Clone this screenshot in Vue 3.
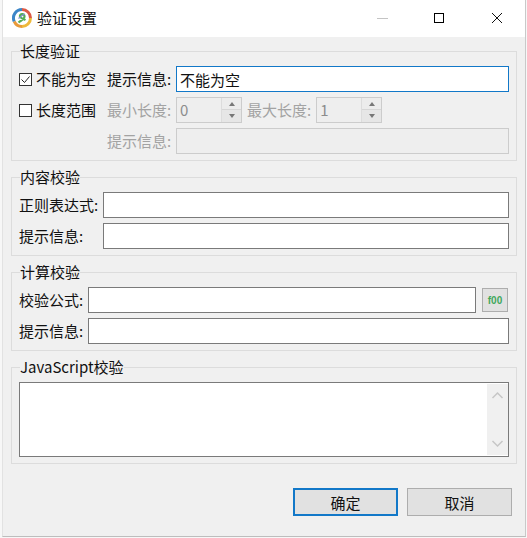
<script setup>
const sectionTwo = [
  { label: '正则表达式:' },
  { label: '提示信息:' }
]
</script>

<template>
  <div class="window">
    <div class="frame">
      <header class="titlebar">
        <svg class="logo" width="20" height="20" viewBox="0 0 20 20" fill="none">
          <path d="M10 1.500A8.500 8.500 0 0 1 18.500 10" stroke="#dc5a45" stroke-width="3" />
          <path d="M18.500 10A8.500 8.500 0 0 1 10 18.500" stroke="#eeb93a" stroke-width="3" />
          <path d="M10 18.500A8.500 8.500 0 0 1 2.200 13.400" stroke="#e89a3a" stroke-width="3" />
          <path d="M2.200 13.400A8.500 8.500 0 0 1 10 1.500" stroke="#3c86c8" stroke-width="3" />
          <path d="M6.500 14.500C9 12.500 12.500 11 12.500 8.500S9 5 8 7.500s3 3 5.500 4.500" stroke="#55ad55" stroke-width="2.200" />
          <path d="M6.500 10.500C8.500 8.500 11 6.500 13 6" stroke="#7d8fd0" stroke-width="1.200" />
        </svg>
        <span class="title">验证设置</span>
        <div class="controls">
          <svg class="ctl" width="56" height="36" viewBox="0 0 56 36"><path d="M20 18.500h11" stroke="#c4c4c4" /></svg>
          <svg class="ctl" width="56" height="36" viewBox="0 0 56 36"><rect x="21.500" y="13.500" width="9" height="9" fill="none" stroke="#000" /></svg>
          <svg class="ctl" width="56" height="36" viewBox="0 0 56 36"><path d="M23 13l10 10M33 13l-10 10" stroke="#111" /></svg>
        </div>
      </header>

      <main class="body">
        <fieldset class="group">
          <legend>长度验证</legend>
          <div class="length-grid">
            <label class="check"><span class="box">
              <svg width="13" height="13" viewBox="0 0 13 13"><path d="M2.500 6.500l3 3 5-6" fill="none" stroke="#222" /></svg>
            </span>不能为空</label>
            <span class="lbl">提示信息:</span>
            <input class="field focus" value="不能为空" />

            <label class="check"><span class="box"></span>长度范围</label>
            <span class="lbl off">最小长度:</span>
            <div class="spin-row">
              <div class="spin">
                <span class="spin-val">0</span>
                <span class="arrows"><i class="up"></i><i class="down"></i></span>
              </div>
              <span class="lbl off">最大长度:</span>
              <div class="spin">
                <span class="spin-val">1</span>
                <span class="arrows"><i class="up"></i><i class="down"></i></span>
              </div>
            </div>

            <span></span>
            <span class="lbl off">提示信息:</span>
            <input class="field disabled" disabled />
          </div>
        </fieldset>

        <fieldset class="group">
          <legend>内容校验</legend>
          <div class="pair-grid wide">
            <template v-for="row in sectionTwo" :key="row.label">
              <span class="lbl">{{ row.label }}</span>
              <input class="field" />
            </template>
          </div>
        </fieldset>

        <fieldset class="group">
          <legend>计算校验</legend>
          <div class="pair-grid">
            <span class="lbl">校验公式:</span>
            <div class="formula">
              <input class="field grow" />
              <button class="fx" type="button">f00</button>
            </div>
            <span class="lbl">提示信息:</span>
            <input class="field" />
          </div>
        </fieldset>

        <fieldset class="group">
          <legend>JavaScript校验</legend>
          <div class="script">
            <div class="scrollbar">
              <svg width="17" height="17" viewBox="0 0 17 17"><path d="M3.500 10l5-5 5 5" fill="none" stroke="#c6c6c6" stroke-width="1.500" /></svg>
              <svg width="17" height="17" viewBox="0 0 17 17"><path d="M3.500 7l5 5 5-5" fill="none" stroke="#c6c6c6" stroke-width="1.500" /></svg>
            </div>
          </div>
        </fieldset>

        <footer class="actions">
          <button class="btn primary" type="button">确定</button>
          <button class="btn" type="button">取消</button>
        </footer>
      </main>
    </div>
  </div>
</template>

<style>
html, body { margin: 0; background: #f7f7f7; }
</style>

<style scoped>
.window {
  box-sizing: border-box;
  width: 527px;
  height: 538px;
  overflow: hidden;
  padding: 0 1px 1px 2px;
  background: #f7f7f7;
  font-family: "Noto Sans CJK SC", "Liberation Sans", sans-serif;
  font-size: 15px;
  color: #111;
}
.frame {
  box-sizing: border-box;
  height: 100%;
  background: #f0f0f0;
  border-left: 1px solid #e2e2e2;
  border-right: 1px solid #c9c9c9;
  border-bottom: 1px solid #bdbdbd;
}
.titlebar {
  display: flex;
  align-items: center;
  height: 37px;
  background: #fff;
  padding-left: 9px;
}
.logo { flex: none; margin-bottom: 1px; }
.title { margin-left: 5px; margin-bottom: 1px; line-height: 20px; }
.controls { display: flex; align-self: flex-start; margin-left: auto; }
.ctl { display: block; }
.body { padding: 7px 0 0 8px; }
.group {
  box-sizing: border-box;
  width: 506px;
  margin: 0 0 9px;
  padding: 8px 7px 6px;
  border: 1px solid #dcdcdc;
  min-width: 0;
}
legend {
  margin-left: 1px;
  padding: 0;
  font-size: 15px;
  line-height: 14px;
  height: 14px;
}
.length-grid {
  display: grid;
  grid-template-columns: 88px 69px 1fr;
  grid-auto-rows: 26px;
  row-gap: 5px;
  align-items: center;
}
.pair-grid {
  display: grid;
  grid-template-columns: 69px 1fr;
  grid-auto-rows: 26px;
  row-gap: 5px;
  align-items: center;
}
.pair-grid.wide { grid-template-columns: 84px 1fr; }
.lbl { white-space: nowrap; line-height: 20px; }
.off { color: #a3a3a3; }
.check { display: flex; align-items: center; white-space: nowrap; line-height: 20px; }
.box {
  box-sizing: border-box;
  width: 13px;
  height: 13px;
  margin-right: 4px;
  border: 1px solid #333;
  background: #fff;
  display: flex;
}
.box svg { margin: -1px; }
.field {
  box-sizing: border-box;
  width: 100%;
  height: 26px;
  padding: 0 3px;
  border: 1px solid #7a7a7a;
  border-radius: 0;
  background: #fff;
  color: #111;
  font: inherit;
  outline: none;
}
.focus { border-color: #1278c8; }
.disabled { background: #eeeeee; border-color: #cccccc; }
.spin-row { display: flex; align-items: center; }
.spin {
  box-sizing: border-box;
  flex: none;
  display: flex;
  width: 66px;
  height: 26px;
  border: 1px solid #cccccc;
  background: #eeeeee;
  color: #8c8c8c;
}
.spin-val { flex: 1; padding-left: 3px; line-height: 24px; }
.spin + .lbl { margin: 0 5px; }
.arrows {
  flex: none;
  width: 19px;
  display: grid;
  grid-template-rows: 1fr 1fr;
  background: linear-gradient(#ececec 11px, #d6d6d6 11px, #d6d6d6 12px, #e6e6e6 12px);
  border-left: 1px solid #dcdcdc;
}
.arrows i { display: block; width: 0; height: 0; margin: auto; border: 3.500px solid transparent; }
.arrows .up { border-top: 0; border-bottom: 4px solid #777; }
.arrows .down { border-bottom: 0; border-top: 4px solid #777; }
.formula { display: flex; align-items: center; }
.grow { flex: 1; min-width: 0; }
.fx {
  box-sizing: border-box;
  flex: none;
  width: 26px;
  height: 24px;
  margin: 0 1px 0 6px;
  padding: 0;
  border: 1px solid #adadad;
  background: #e1e1e1;
  color: #3fa85c;
  font: bold 10px "Liberation Sans", sans-serif;
}
.script {
  box-sizing: border-box;
  height: 75px;
  display: flex;
  justify-content: flex-end;
  border: 1px solid #7a7a7a;
  background: #fff;
}
.scrollbar {
  width: 21px;
  margin: 1px 0;
  background: #f0f0f0;
  display: flex;
  flex-direction: column;
  justify-content: space-between;
  align-items: center;
  padding: 4px 0;
  box-sizing: border-box;
}
.scrollbar svg { display: block; }
.actions {
  display: flex;
  gap: 9px;
  justify-content: flex-end;
  width: 501px;
  margin-top: 24px;
}
.btn {
  box-sizing: border-box;
  width: 105px;
  height: 28px;
  padding: 0;
  border: 1px solid #adadad;
  background: #e1e1e1;
  color: #111;
  font: inherit;
}
.primary { border: 2px solid #1278c8; }
</style>
